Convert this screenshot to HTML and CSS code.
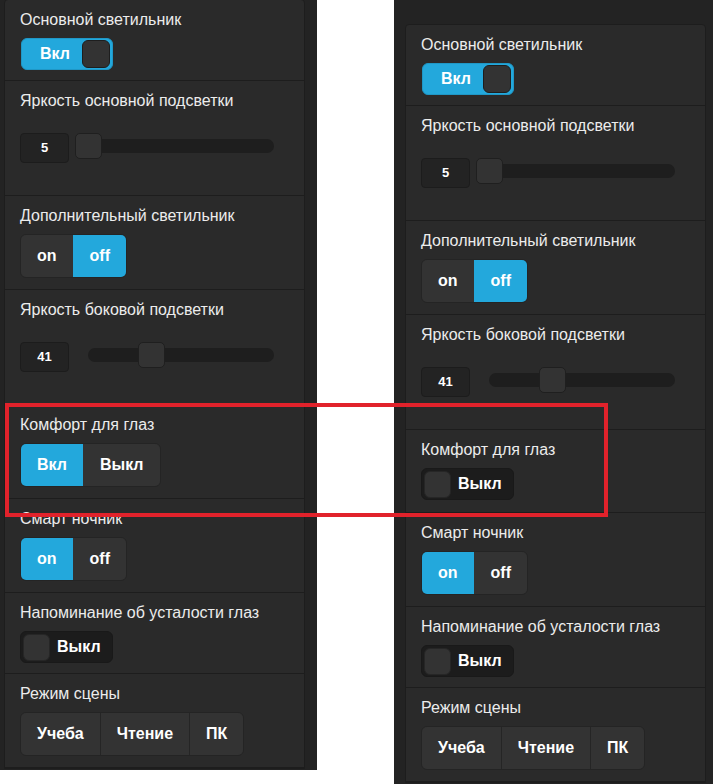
FILE: index.html
```html
<!DOCTYPE html>
<html lang="ru">
<head>
<meta charset="utf-8">
<title>Настройки света</title>
<link rel="stylesheet" href="styles.css">
</head>
<body>
<div class="page">
  <div class="panel panel-left">
    <div class="card">
      <div class="section">
        <div class="label">Основной светильник</div>
        <div class="toggle on"><span class="toggle-text">Вкл</span><span class="knob"></span></div>
      </div>
      <div class="section slider-section">
        <div class="label">Яркость основной подсветки</div>
        <div class="slider">
          <div class="value">5</div>
          <div class="track"><div class="thumb" style="left:-13px"></div></div>
        </div>
      </div>
      <div class="section tall">
        <div class="label">Дополнительный светильник</div>
        <div class="seg"><span class="seg-item">on</span><span class="seg-item active">off</span></div>
      </div>
      <div class="section slider-section">
        <div class="label">Яркость боковой подсветки</div>
        <div class="slider">
          <div class="value">41</div>
          <div class="track"><div class="thumb" style="left:50px"></div></div>
        </div>
      </div>
      <div class="section tall">
        <div class="label">Комфорт для глаз</div>
        <div class="seg"><span class="seg-item active">Вкл</span><span class="seg-item">Выкл</span></div>
      </div>
      <div class="section tall">
        <div class="label">Смарт ночник</div>
        <div class="seg"><span class="seg-item active">on</span><span class="seg-item">off</span></div>
      </div>
      <div class="section">
        <div class="label">Напоминание об усталости глаз</div>
        <div class="toggle off"><span class="knob"></span><span class="toggle-text">Выкл</span></div>
      </div>
      <div class="section tall">
        <div class="label">Режим сцены</div>
        <div class="seg"><span class="seg-item">Учеба</span><span class="seg-item">Чтение</span><span class="seg-item">ПК</span></div>
      </div>
    </div>
  </div>

  <div class="spacer"></div>

  <div class="panel panel-right">
    <div class="card">
      <div class="section">
        <div class="label">Основной светильник</div>
        <div class="toggle on"><span class="toggle-text">Вкл</span><span class="knob"></span></div>
      </div>
      <div class="section slider-section">
        <div class="label">Яркость основной подсветки</div>
        <div class="slider">
          <div class="value">5</div>
          <div class="track"><div class="thumb" style="left:-13px"></div></div>
        </div>
      </div>
      <div class="section tall">
        <div class="label">Дополнительный светильник</div>
        <div class="seg"><span class="seg-item">on</span><span class="seg-item active">off</span></div>
      </div>
      <div class="section slider-section">
        <div class="label">Яркость боковой подсветки</div>
        <div class="slider">
          <div class="value">41</div>
          <div class="track"><div class="thumb" style="left:50px"></div></div>
        </div>
      </div>
      <div class="section comfort">
        <div class="label">Комфорт для глаз</div>
        <div class="toggle off"><span class="knob"></span><span class="toggle-text">Выкл</span></div>
      </div>
      <div class="section tall">
        <div class="label">Смарт ночник</div>
        <div class="seg"><span class="seg-item active">on</span><span class="seg-item">off</span></div>
      </div>
      <div class="section">
        <div class="label">Напоминание об усталости глаз</div>
        <div class="toggle off"><span class="knob"></span><span class="toggle-text">Выкл</span></div>
      </div>
      <div class="section tall">
        <div class="label">Режим сцены</div>
        <div class="seg"><span class="seg-item">Учеба</span><span class="seg-item">Чтение</span><span class="seg-item">ПК</span></div>
      </div>
    </div>
  </div>

  <div class="highlight"></div>
</div>
</body>
</html>
```

FILE: styles.css
```css
* { box-sizing: border-box; }

html, body {
  margin: 0;
  padding: 0;
  background: #ffffff;
}

body {
  font-family: "Liberation Sans", Arial, sans-serif;
  color: #f2f2f2;
}

.page {
  position: relative;
  display: flex;
  align-items: flex-start;
  width: 719px;
  height: 784px;
  overflow: hidden;
}

.panel {
  background: #232323;
  overflow: hidden;
  flex: none;
}

.panel-left {
  width: 317px;
  height: 770px;
  padding-left: 4px;
}

.panel-left .card {
  margin-top: -1px;
}

.spacer {
  width: 77px;
  flex: none;
}

.panel-right {
  width: 319px;
  height: 784px;
  padding: 24px 0 0 11px;
}

.card {
  width: 301px;
  background: #2a2a2a;
  border: 1px solid #1d1d1d;
  border-radius: 4px 4px 0 0;
}

.section {
  display: flex;
  flex-direction: column;
  align-items: flex-start;
  padding: 9px 15px 10px;
  border-bottom: 1px solid #1d1d1d;
}

.section.tall {
  padding-bottom: 11px;
}

.section.comfort {
  padding-bottom: 12px;
}

.label {
  font-size: 16px;
  line-height: 22px;
  height: 22px;
  margin-bottom: 7px;
  white-space: nowrap;
  color: #ececec;
}

/* flip toggle */
.toggle {
  display: flex;
  align-items: center;
  height: 32px;
  border-radius: 6px;
  font-size: 16px;
  font-weight: bold;
  color: #ffffff;
}

.toggle.on {
  width: 92px;
  margin-left: 1px;
  background: #23a8dc;
  border: 1px solid #1f97c6;
  padding: 0 2px 0 18px;
  justify-content: space-between;
}

.toggle.off {
  width: 93px;
  background: #1c1c1c;
  border: 1px solid #191919;
  padding: 0 0 0 2px;
  gap: 7px;
}

.knob {
  display: block;
  width: 28px;
  height: 28px;
  background: #333333;
  border: 1px solid #1e1e1e;
  border-radius: 6px;
}

.toggle.off .knob {
  width: 27px;
  height: 27px;
  border-color: #262626;
}

/* segmented controls */
.seg {
  display: flex;
  height: 44px;
  border: 1px solid #242424;
  border-radius: 6px;
  overflow: hidden;
  font-size: 16px;
  font-weight: bold;
  color: #ffffff;
}

.seg-item {
  display: block;
  padding: 0 16px;
  line-height: 42px;
  background: #333333;
}

.seg-item + .seg-item {
  border-left: 1px solid #252525;
}

.seg-item.active {
  background: #23a8dc;
}

.seg-item.active + .seg-item,
.seg-item + .seg-item.active {
  border-left-color: transparent;
}

/* sliders */
.slider {
  display: flex;
  align-items: flex-start;
  height: 30px;
  margin: 14px 0 22px;
}

.value {
  width: 49px;
  height: 30px;
  background: #232323;
  border: 1px solid #1c1c1c;
  border-radius: 4px;
  font-size: 13px;
  font-weight: bold;
  line-height: 28px;
  text-align: center;
  color: #ffffff;
}

.track {
  position: relative;
  width: 186px;
  height: 14px;
  margin: 6px 0 0 19px;
  background: #1e1e1e;
  border-radius: 7px;
}

.thumb {
  position: absolute;
  top: -6px;
  width: 27px;
  height: 26px;
  background: #333333;
  border: 1px solid #1f1f1f;
  border-radius: 5px;
}

/* red highlight rectangle overlay */
.highlight {
  position: absolute;
  left: 5px;
  top: 403px;
  width: 603px;
  height: 114px;
  border: 4px solid #e1222b;
  pointer-events: none;
}
```
